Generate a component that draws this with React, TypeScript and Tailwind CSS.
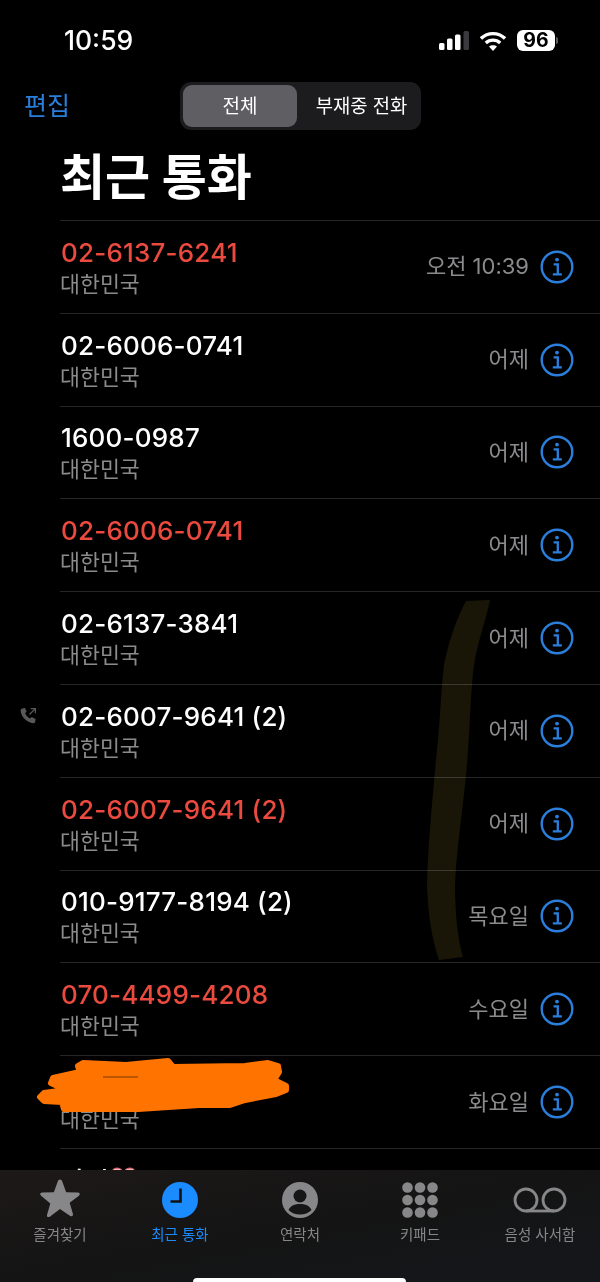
import React from 'react';

const FONT = "font-['Inter','Noto_Sans_CJK_KR',sans-serif]";

type Call = { number: string; when: string; missed?: boolean };

const CALLS: Call[] = [
  { number: '02-6137-6241', when: '오전 10:39', missed: true },
  { number: '02-6006-0741', when: '어제' },
  { number: '1600-0987', when: '어제' },
  { number: '02-6006-0741', when: '어제', missed: true },
  { number: '02-6137-3841', when: '어제' },
  { number: '02-6007-9641 (2)', when: '어제' },
  { number: '02-6007-9641 (2)', when: '어제', missed: true },
  { number: '010-9177-8194 (2)', when: '목요일' },
  { number: '070-4499-4208', when: '수요일', missed: true },
  { number: '010-0000-0000', when: '화요일' },
];

const InfoIcon = () => (
  <svg width="34" height="34" viewBox="0 0 34 34" fill="none" className="shrink-0">
    <circle cx="17" cy="17" r="15.3" stroke="#2a7fdc" strokeWidth="2.4" />
    <circle cx="17" cy="9.6" r="1.9" fill="#2a7fdc" />
    <path d="M13.6 14.4h4.2v9.6M12.8 24.4h9" stroke="#2a7fdc" strokeWidth="2.3" />
  </svg>
);

const OutgoingIcon = () => (
  <svg width="18" height="18" viewBox="0 0 18 18" fill="none">
    <path
      d="M3.4 1.4 6 1l1.6 3.6-1.5 1.6c.7 2 2.8 4.3 5 5.3l1.6-1.5L16.6 12l-.4 2.7c-.2 1-1 1.6-2 1.5C7.700 15.500 2.200 10 1.600 3.500c-.1-1 .7-1.900 1.800-2.100Z"
      fill="#58585a"
    />
    <path d="M10.500 7.500 16 2M11.800 1.600h4.600v4.600" stroke="#58585a" strokeWidth="1.200" />
  </svg>
);

const Row = ({ call }: { call: Call }) => (
  <div className="h-[92.8px] ml-[60px] border-t border-[#262628] flex items-center pr-[26px]">
    <div className="flex-1 min-w-0 pl-[1px] mt-[3px]">
      <div className={`text-[26px] leading-[32px] font-medium tracking-[0.2px] ${call.missed ? 'text-[#eb4a3f]' : 'text-white'}`}>
        {call.number}
      </div>
      <div className="text-[21.700px] leading-[31px] -ml-[1px] text-[#8b8b8e]">대한민국</div>
    </div>
    <span className="text-[22px] text-[#8b8b8e] mr-[11px]">{call.when}</span>
    <InfoIcon />
  </div>
);

const Tab = ({ label, active, children }: { label: string; active?: boolean; children: React.ReactNode }) => (
  <div className="flex flex-col items-center">
    <div className="h-[44px] flex items-center justify-center">{children}</div>
    <span className={`text-[14.5px] leading-[20px] mt-[3px] whitespace-nowrap ${active ? 'text-[#1a8cff]' : 'text-[#87878a]'}`}>{label}</span>
  </div>
);

const TabBar = () => (
  <div className="relative z-10 h-[112px] shrink-0 grid grid-cols-5 pt-[8px] bg-linear-to-br from-[#1d1918] via-[#141414] to-[#14171b]">
    <Tab label="즐겨찾기">
      <svg width="40" height="38" viewBox="0 0 44 42" className="-mt-[4px]">
        <path d="M22 .5c1.300 0 2 1 2.500 2.400l4.300 11.700 13 .4c2.200.1 2.800 2.100 1.100 3.400l-10.200 7.800 3.600 12.400c.6 2.100-1.300 3.400-3 2.200L22 33.200l-11.300 8.600c-1.700 1.200-3.600-.1-3-2.200l3.600-12.400L1.100 18.400C-.6 17.100 0 15.100 2.200 15l13-.4 4.300-11.700C20 1.500 20.700.5 22 .5Z" fill="#87878a" />
      </svg>
    </Tab>
    <Tab label="최근 통화" active>
      <svg width="36" height="36" viewBox="0 0 36 36">
        <circle cx="18" cy="18" r="18" fill="#1a8cff" />
        <path d="M18.500 6.500v13H8.500" stroke="#111" strokeWidth="2.600" fill="none" />
      </svg>
    </Tab>
    <Tab label="연락처">
      <svg width="36" height="36" viewBox="0 0 36 36">
        <circle cx="18" cy="18" r="18" fill="#87878a" />
        <circle cx="18" cy="14" r="6.500" fill="#161616" />
        <path d="M6.500 28c2-4.500 6.500-6 11.500-6s9.500 1.500 11.500 6c-3 3-7 4.500-11.500 4.500S9.500 31 6.500 28Z" fill="#161616" />
      </svg>
    </Tab>
    <Tab label="키패드">
      <svg width="36" height="36" viewBox="0 0 36 36" fill="#87878a">
        {[5.5, 18, 30.5].map(y => [5.5, 18, 30.5].map(x => <circle key={`${x}-${y}`} cx={x} cy={y} r="5.300" />))}
      </svg>
    </Tab>
    <Tab label="음성 사서함">
      <svg width="54" height="26" viewBox="0 0 54 26" fill="none" stroke="#87878a" strokeWidth="2.800">
        <circle cx="13" cy="13" r="11" />
        <circle cx="41" cy="13" r="11" />
        <path d="M13 24h28" />
      </svg>
    </Tab>
  </div>
);

export default function App() {
  return (
    <div className={`${FONT} relative w-[600px] h-[1282px] overflow-hidden bg-black flex flex-col`}>
      {/* status bar */}
      <div className="h-[80px] shrink-0 flex items-center justify-between pl-[64px] pr-[42px] pt-[1px]">
        <span className="text-white text-[26.5px] font-medium">10:59</span>
        <div className="flex items-center gap-[11px]">
          <svg width="30" height="19" viewBox="0 0 30 19">
            <rect x="0" y="12" width="5.500" height="7" rx="1.500" fill="#fff" />
            <rect x="8" y="7.500" width="5.500" height="11.500" rx="1.500" fill="#fff" />
            <rect x="16" y="3.500" width="5.500" height="15.500" rx="1.500" fill="#fff" />
            <rect x="24.500" y="0" width="5.500" height="19" rx="1.500" fill="#3a3a3c" />
          </svg>
          <svg width="26" height="20" viewBox="0 0 26 20" fill="none" stroke="#fff" strokeWidth="3.400">
            <path d="M1 7.500c6.800-6.500 17.200-6.500 24 0M5.800 12c4.200-3.800 10.200-3.800 14.400 0" />
            <path d="M13 20l-4-4.500c2.300-1.800 5.700-1.800 8 0Z" fill="#fff" stroke="none" />
          </svg>
          <div className="flex items-center">
            <div className="w-[38px] h-[21px] rounded-[6px] bg-white flex items-center justify-center text-black text-[19.5px] font-bold">96</div>
            <div className="w-[2px] h-[7px] ml-[1px] rounded-r bg-[#5c5c5e]" />
          </div>
        </div>
      </div>

      {/* nav */}
      <div className="relative h-[50px] shrink-0 flex items-end justify-center">
        <span className="absolute left-[24px] top-[8px] text-[25px] leading-[36px] text-[#2a7fdc]">편집</span>
        <div className="flex w-[241px] h-[48px] rounded-[11px] bg-[#1c1c1e] p-[3px] ml-[1px]">
          <div className="w-[114px] pt-[2px] rounded-[9px] bg-[#5f5f63] flex items-center justify-center text-white text-[19px]">전체</div>
          <div className="flex-1 flex items-center justify-center pt-[2px] pl-[8px] text-white text-[18.800px] whitespace-nowrap">부재중 전화</div>
        </div>
      </div>

      <h1 className="h-[90px] shrink-0 pl-[60px] pt-[18px] text-white text-[49px] leading-[60px] font-bold">최근 통화</h1>

      {/* list */}
      <div className="flex-1 min-h-0 overflow-hidden relative">
        <div className="absolute left-[19px] top-[487px]"><OutgoingIcon /></div>
        {CALLS.map((c, i) => <Row key={i} call={c} />)}
        <div className="h-[93px] ml-[60px] pl-[1px] pt-[17px] border-t border-[#262628] flex items-start text-[26px] font-medium text-white leading-[32px]">
          자기
          <svg width="27" height="24" viewBox="0 0 27 24" className="mt-[1px] ml-[1px]">
            <path d="M13.500 23C6 17 1 12.500 1 7c0-3.500 2.700-6 6-6 2.800 0 5 1.500 6.500 4C15 2.500 17.200 1 20 1c3.300 0 6 2.500 6 6 0 5.500-5 10-12.500 16Z" fill="#f4b4b8" stroke="#d8505a" strokeWidth="1" />
          </svg>
        </div>
      </div>

      <TabBar />

      {/* home indicator */}
      <div className="absolute bottom-0 left-[193px] w-[213px] h-[4px] rounded-t-[4px] bg-white z-20" />

      {/* yellow marker scribble */}
      <svg className="absolute left-[420px] top-[595px] pointer-events-none mix-blend-screen" width="80" height="370" viewBox="0 0 80 370">
        <path d="M46 6 L70 5 C66 25 58 45 54 70 C50 100 50 140 46 180 C42 220 36 260 35 290 C35 320 38 345 43 362 L19 365 C12 345 8 320 7 290 C8 250 12 210 16 165 C20 130 21 95 24 70 C30 40 38 22 46 6 Z" fill="#1a1607" />
      </svg>

      {/* orange redaction scribble */}
      <svg className="absolute left-[30px] top-[1050px] pointer-events-none" width="270" height="70" viewBox="0 0 270 70">
        <path
          d="M50 22 L48 16 L53 13 L96 15 L138 11 L143 17 L215 16 L238 13 L248 16 L249 22 L244 30 L256 36 L256 40 L246 44 L215 50 L200 55 L169 55 L108 59 L34 59 L32 52 L14 51 L10 47 L14 43 L36 40 L21 33 L23 28 Z"
          fill="#ff7300"
          stroke="#ff7300"
          strokeWidth="6"
          strokeLinejoin="round"
        />
        <path d="M73 27 L108 27" stroke="#7a3800" strokeWidth="1.200" />
      </svg>
    </div>
  );
}
